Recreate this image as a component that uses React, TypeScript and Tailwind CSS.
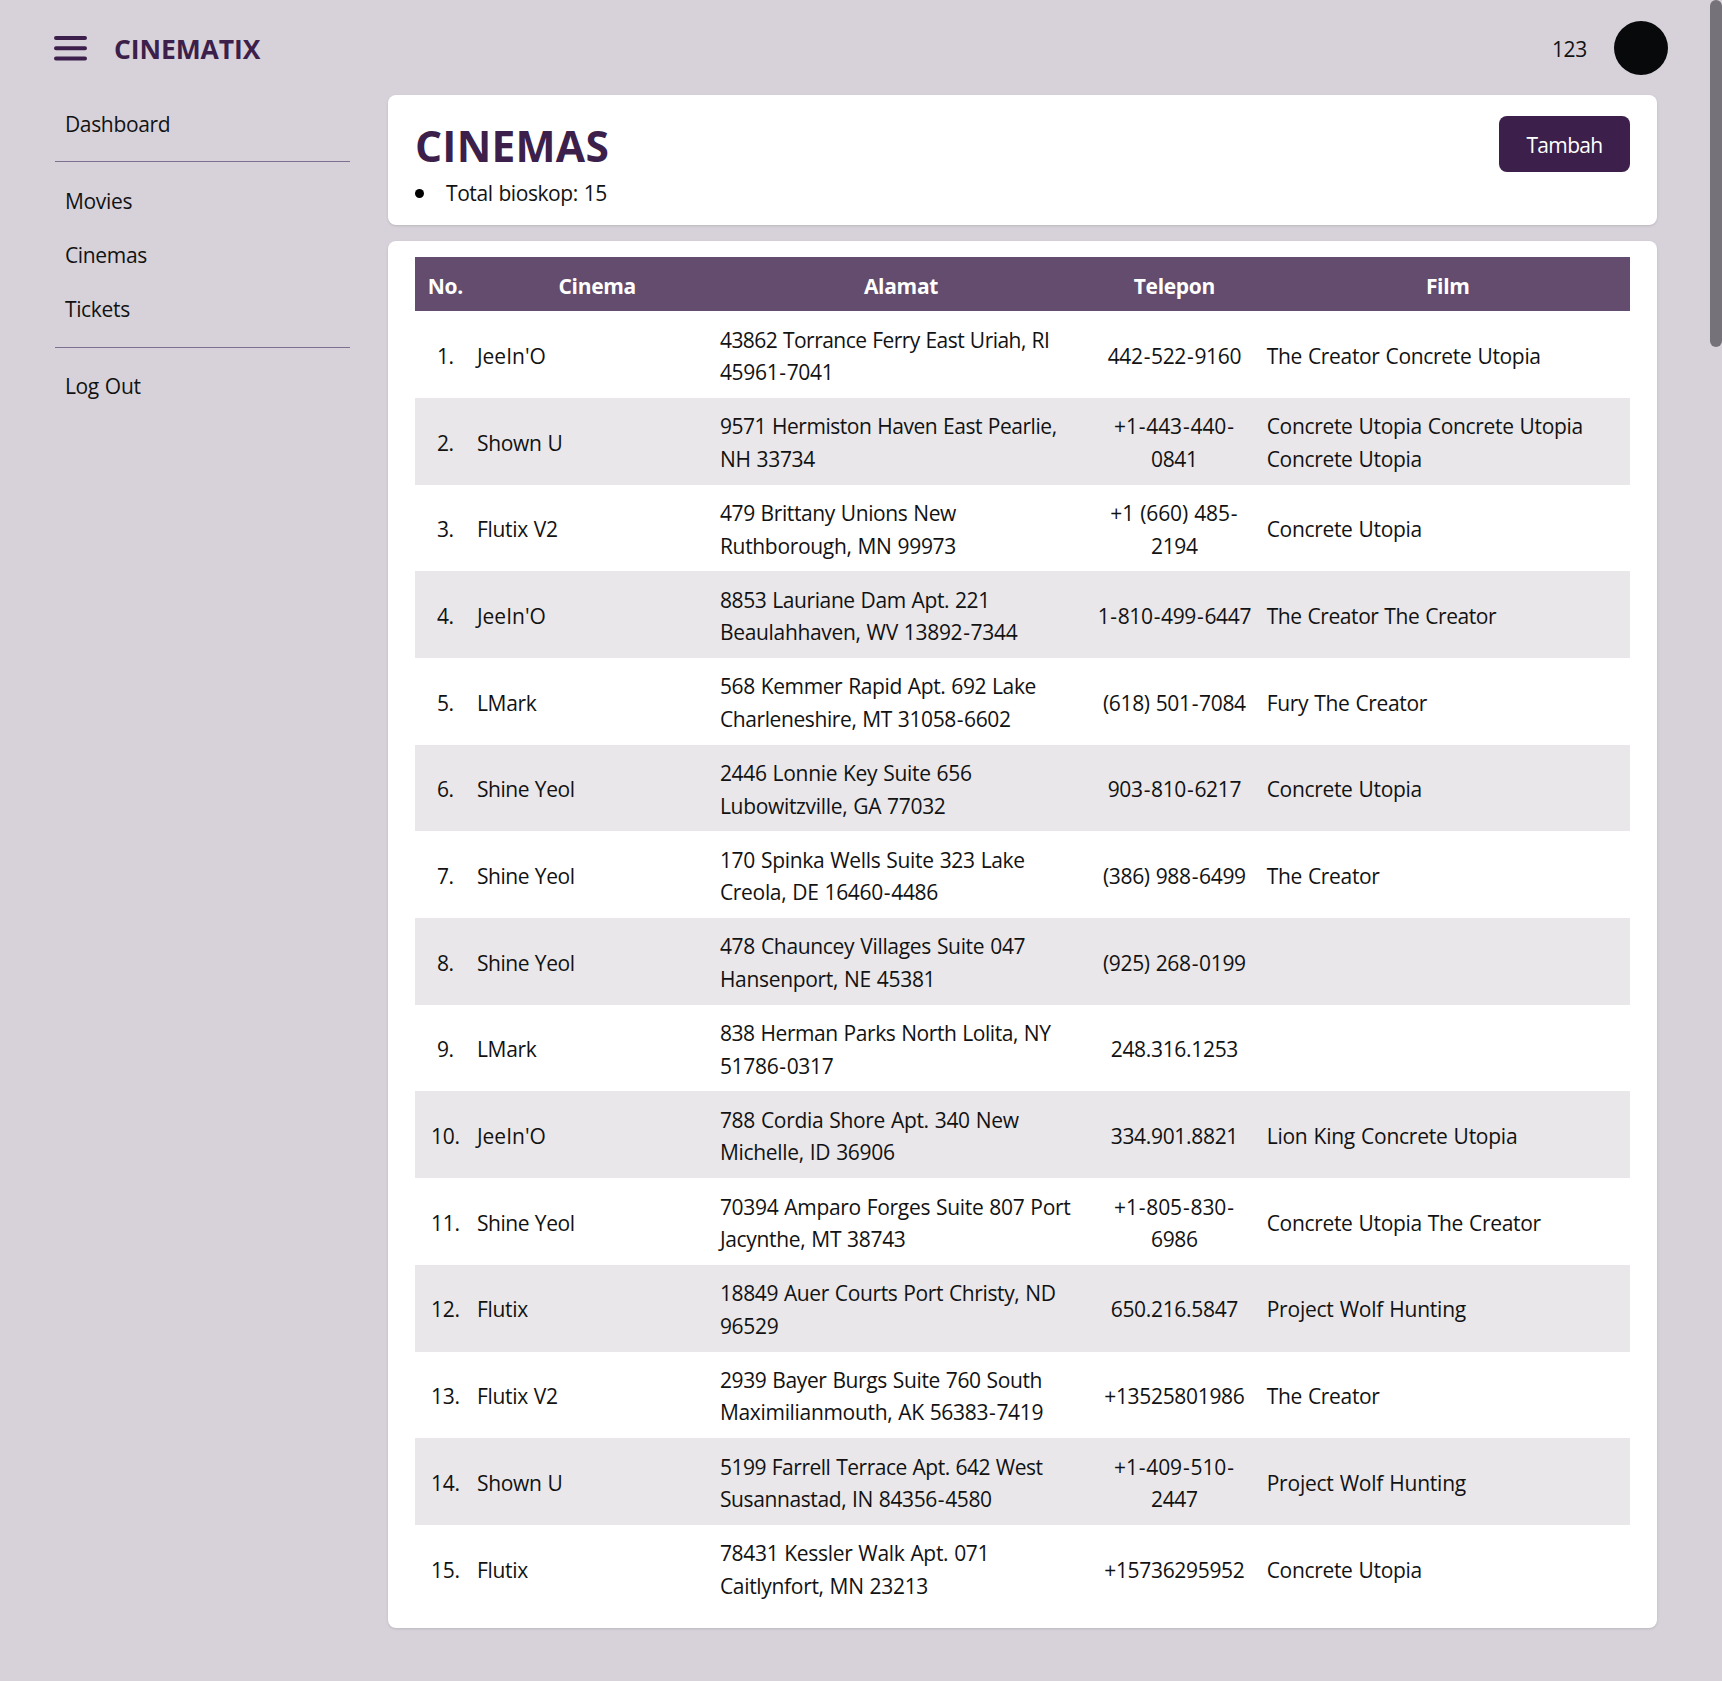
import { Fragment } from "react";

const cinemas: [string, string[], string[], string[]][] = [
  ["JeeIn'O", ["43862 Torrance Ferry East Uriah, RI", "45961-7041"], ["442-522-9160"], ["The Creator Concrete Utopia"]],
  ["Shown U", ["9571 Hermiston Haven East Pearlie,", "NH 33734"], ["+1-443-440-", "0841"], ["Concrete Utopia Concrete Utopia", "Concrete Utopia"]],
  ["Flutix V2", ["479 Brittany Unions New", "Ruthborough, MN 99973"], ["+1 (660) 485-", "2194"], ["Concrete Utopia"]],
  ["JeeIn'O", ["8853 Lauriane Dam Apt. 221", "Beaulahhaven, WV 13892-7344"], ["1-810-499-6447"], ["The Creator The Creator"]],
  ["LMark", ["568 Kemmer Rapid Apt. 692 Lake", "Charleneshire, MT 31058-6602"], ["(618) 501-7084"], ["Fury The Creator"]],
  ["Shine Yeol", ["2446 Lonnie Key Suite 656", "Lubowitzville, GA 77032"], ["903-810-6217"], ["Concrete Utopia"]],
  ["Shine Yeol", ["170 Spinka Wells Suite 323 Lake", "Creola, DE 16460-4486"], ["(386) 988-6499"], ["The Creator"]],
  ["Shine Yeol", ["478 Chauncey Villages Suite 047", "Hansenport, NE 45381"], ["(925) 268-0199"], []],
  ["LMark", ["838 Herman Parks North Lolita, NY", "51786-0317"], ["248.316.1253"], []],
  ["JeeIn'O", ["788 Cordia Shore Apt. 340 New", "Michelle, ID 36906"], ["334.901.8821"], ["Lion King Concrete Utopia"]],
  ["Shine Yeol", ["70394 Amparo Forges Suite 807 Port", "Jacynthe, MT 38743"], ["+1-805-830-", "6986"], ["Concrete Utopia The Creator"]],
  ["Flutix", ["18849 Auer Courts Port Christy, ND", "96529"], ["650.216.5847"], ["Project Wolf Hunting"]],
  ["Flutix V2", ["2939 Bayer Burgs Suite 760 South", "Maximilianmouth, AK 56383-7419"], ["+13525801986"], ["The Creator"]],
  ["Shown U", ["5199 Farrell Terrace Apt. 642 West", "Susannastad, IN 84356-4580"], ["+1-409-510-", "2447"], ["Project Wolf Hunting"]],
  ["Flutix", ["78431 Kessler Walk Apt. 071", "Caitlynfort, MN 23213"], ["+15736295952"], ["Concrete Utopia"]],
];

// Lines that need a tighter or looser fit than the page default.
const tracking: Record<string, string> = {
  "43862 Torrance Ferry East Uriah, RI": "tracking-[-0.54px]",
  "9571 Hermiston Haven East Pearlie,": "tracking-[-0.46px]",
  "838 Herman Parks North Lolita, NY": "tracking-[-0.43px]",
  "18849 Auer Courts Port Christy, ND": "tracking-[-0.38px]",
  "5199 Farrell Terrace Apt. 642 West": "tracking-[-0.49px]",
  "568 Kemmer Rapid Apt. 692 Lake": "tracking-[-0.38px]",
  "Charleneshire, MT 31058-6602": "tracking-[-0.4px]",
  "Susannastad, IN 84356-4580": "tracking-[-0.39px]",
  "2939 Bayer Burgs Suite 760 South": "tracking-[-0.38px]",
  "479 Brittany Unions New": "tracking-[-0.4px]",
  "8853 Lauriane Dam Apt. 221": "tracking-[-0.4px]",
  "The Creator The Creator": "tracking-[-0.42px]",
  "Lion King Concrete Utopia": "tracking-[-0.24px]",
  "Project Wolf Hunting": "tracking-[-0.22px]",
  "Shine Yeol": "tracking-[-0.45px]",
  "JeeIn'O": "tracking-[0px]",
  "+1-443-440-": "tracking-[-0.12px]",
  "+1-805-830-": "tracking-[-0.12px]",
  "+1-409-510-": "tracking-[-0.12px]",
  "+1 (660) 485-": "tracking-[-0.12px]",
};

// Hyphens get a little air on both sides so digit groups stay apart.
function Hyphenated({ text }: { text: string }) {
  return (
    <>
      {text.split("-").map((part, i) => (
        <Fragment key={i}>
          {i > 0 && <span className="px-[0.95px]">-</span>}
          {part}
        </Fragment>
      ))}
    </>
  );
}

function Lines({ lines }: { lines: string[] }) {
  return (
    <>
      {lines.map((line, i) => (
        <span key={i} className={`block whitespace-nowrap ${tracking[line] ?? ""}`}>
          <Hyphenated text={line} />
        </span>
      ))}
    </>
  );
}

function NavItem({ label }: { label: string }) {
  return <a className="flex h-[54.2px] items-center pt-0.5 pl-[10.4px]">{label}</a>;
}

function Divider() {
  return <hr className="my-[11px] border-t-[1.4px] border-[#7d7090]" />;
}

export default function App() {
  return (
    <div className="relative h-[1681px] overflow-hidden bg-[#d7d2da] font-['Open_Sans',sans-serif] text-[21px] leading-[32.5px] tracking-[-0.32px] text-[#121212] [word-spacing:0.8px]">
      <header className="flex h-[95px] items-center pr-[54px] pl-[54px]">
        <svg width="33" height="27" viewBox="0 0 33 27" className="mt-px text-[#3c1f4a]" aria-label="Menu">
          <g stroke="currentColor" strokeWidth="4" strokeLinecap="round">
            <path d="M2 3H31M2 13.3H31M2 23.5H31" />
          </g>
        </svg>
        <h1 className="ml-[27px] mt-[3px] text-[26.5px] font-bold tracking-[-0.1px] text-[#3c1f4a]">CINEMATIX</h1>
        <span className="ml-auto mt-[3px]">123</span>
        <div className="ml-[27px] size-[54px] rounded-full bg-[#08090a]" />
      </header>

      <div className="flex">
        <nav className="ml-[54.5px] w-[295px] shrink-0 pt-[0.8px]">
          <NavItem label="Dashboard" />
          <Divider />
          <NavItem label="Movies" />
          <NavItem label="Cinemas" />
          <NavItem label="Tickets" />
          <Divider />
          <NavItem label="Log Out" />
        </nav>

        <main className="ml-[38.5px] flex w-[1269px] flex-col gap-4">
          <section className="flex h-[130px] items-start justify-between rounded-lg bg-white px-[27px] shadow-sm">
            <div>
              <h2 className="mt-[20px] text-[42.5px] leading-[62px] font-bold tracking-[0.25px] text-[#3c1f4a]">CINEMAS</h2>
              <div className="flex items-center">
                <span className="size-[9px] rounded-full bg-black" />
                <span className="ml-[22px] tracking-[-0.42px]">Total bioskop: 15</span>
              </div>
            </div>
            <button className="mt-[20.5px] h-14 w-[131px] rounded-lg bg-[#3c1f4a] pt-[3px] tracking-[-0.65px] text-white">Tambah</button>
          </section>

          <section className="h-[1386.5px] rounded-lg bg-white px-[27px] pt-4 shadow-sm">
            <table className="w-full table-fixed border-collapse">
              <colgroup>
                <col className="w-[5%]" />
                <col className="w-[20%]" />
                <col className="w-[30%]" />
                <col className="w-[15%]" />
                <col className="w-[30%]" />
              </colgroup>
              <thead>
                <tr className="h-[54.3px] bg-[#634c6d] text-white [&>th]:pt-[4px]">
                  <th>No.</th>
                  <th>Cinema</th>
                  <th>Alamat</th>
                  <th>Telepon</th>
                  <th>Film</th>
                </tr>
              </thead>
              <tbody>
                {cinemas.map(([name, address, phone, films], i) => (
                  <tr key={i} className="h-[86.7px] even:bg-[#e9e7ea] [&>td]:pt-[3px]">
                    <td className="text-center">{i + 1}.</td>
                    <td className="pl-[1.2px]"><Lines lines={[name]} /></td>
                    <td className="pl-[1.2px]"><Lines lines={address} /></td>
                    <td className="text-center"><Lines lines={phone} /></td>
                    <td className="pl-[1.2px]"><Lines lines={films} /></td>
                  </tr>
                ))}
              </tbody>
            </table>
          </section>
        </main>
      </div>

      <div className="absolute top-0 right-0 h-[347px] w-3 rounded-full bg-[#757379]" />
    </div>
  );
}
